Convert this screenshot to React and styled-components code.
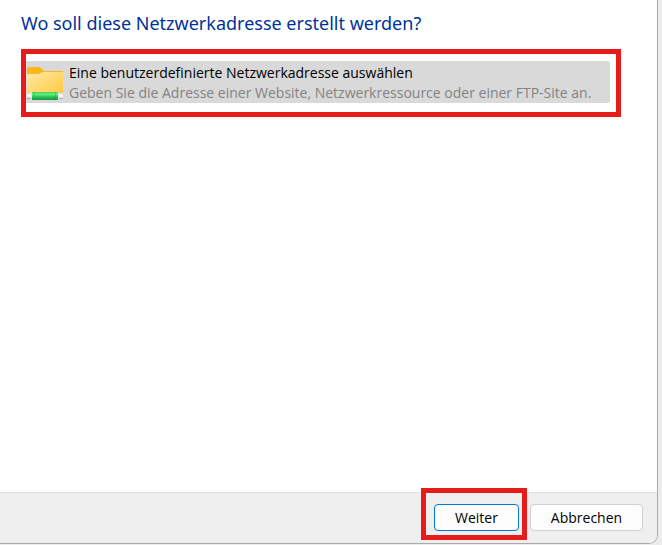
import React, { useState } from "react";
import styled, { createGlobalStyle, css } from "styled-components";

const App = () => {
  const [selected, setSelected] = useState(true);

  return (
    <>
      <GlobalStyle />
      <Desktop>
        <Dialog>
          <Content>
            <Title>Wo soll diese Netzwerkadresse erstellt werden?</Title>
            <Highlight>
              <LocationItem
                type="button"
                aria-pressed={selected}
                $selected={selected}
                onClick={() => setSelected(!selected)}
              >
                <NetworkFolderIcon />
                <LocationText>
                  <LocationName>
                    Eine benutzerdefinierte Netzwerkadresse auswählen
                  </LocationName>
                  <LocationHint>
                    Geben Sie die Adresse einer Website, Netzwerkressource oder
                    einer FTP-Site an.
                  </LocationHint>
                </LocationText>
              </LocationItem>
            </Highlight>
          </Content>
          <Footer>
            <Marked>
              <Button type="button" $primary>
                Weiter
              </Button>
            </Marked>
            <Button type="button" $wide>
              Abbrechen
            </Button>
          </Footer>
        </Dialog>
      </Desktop>
    </>
  );
};

const NetworkFolderIcon = () => (
  <FolderSvg viewBox="0 0 37 34" aria-hidden="true">
    <defs>
      <linearGradient id="folder" x1="0" y1="0" x2="1" y2="1">
        <stop offset="0" stopColor="#ffe9a8" />
        <stop offset="1" stopColor="#ffc93e" />
      </linearGradient>
      <linearGradient id="pipe" x1="0" y1="0" x2="0" y2="1">
        <stop offset="0" stopColor="#d8d8d8" />
        <stop offset="0.4" stopColor="#ffffff" />
        <stop offset="0.75" stopColor="#e4e4e4" />
        <stop offset="1" stopColor="#8c8c8c" />
      </linearGradient>
      <linearGradient id="cable" x1="0" y1="0" x2="0" y2="1">
        <stop offset="0" stopColor="#43cf62" />
        <stop offset="0.3" stopColor="#5df07a" />
        <stop offset="0.6" stopColor="#2fc257" />
        <stop offset="1" stopColor="#159345" />
      </linearGradient>
    </defs>
    <path
      d="M1 3Q1 1 3 1H12Q14 1 15 2L18 5H36Q37 5 37 6V10H1Z"
      fill="#fbb81b"
    />
    <path
      d="M1 8H12Q14 8 15 7L17 6H37V28H1Z"
      fill="url(#folder)"
    />
    <rect x="1" y="27" width="36" height="6" fill="url(#pipe)" />
    <rect x="5" y="26" width="28" height="8" fill="#e6e6e6" />
    <rect x="6" y="26" width="26" height="8" fill="url(#cable)" />
    <path d="M8.5 26V34M29.5 26V34" stroke="#159345" strokeOpacity="0.3" />
  </FolderSvg>
);

export default App;

const GlobalStyle = createGlobalStyle`
  * {
    box-sizing: border-box;
  }

  body {
    margin: 0;
    background: #ececec;
    font-family: "Segoe UI", "Open Sans", "Noto Sans", sans-serif;
  }
`;

const redFrame = css`
  border: 5px solid #e81b1b;
`;

const Desktop = styled.div`
  min-height: 100vh;
  display: flex;
  padding: 0 4px 1px 0;
`;

const Dialog = styled.main`
  flex: 1;
  display: flex;
  flex-direction: column;
  overflow: hidden;
  background: #ffffff;
  border: solid #a9a9a9;
  border-width: 0 1px 1px 0;
  border-bottom-right-radius: 9px;
`;

const Content = styled.section`
  flex: 1;
  padding: 9px 36px 20px 21px;
`;

const Title = styled.h1`
  margin: 0 0 12px;
  color: #003399;
  font-family: "Segoe UI", "Noto Sans", sans-serif;
  font-size: 18px;
  font-weight: 400;
  line-height: 28px;
`;

const Highlight = styled.div`
  ${redFrame}
  padding: 7px 6px 9px 0;
`;

const LocationItem = styled.button`
  width: 100%;
  display: flex;
  align-items: center;
  gap: 6px;
  padding: 2px 0 0;
  border: 0;
  border-radius: 0 2px 2px 0;
  background: ${(props) => (props.$selected ? "#d9d9d9" : "transparent")};
  font: inherit;
  text-align: left;
`;

const FolderSvg = styled.svg`
  flex: none;
  width: 37px;
  height: 34px;
`;

const LocationText = styled.span`
  display: flex;
  flex-direction: column;
  font-size: 14px;
  line-height: 20px;
`;

const LocationName = styled.span`
  color: #000000;
`;

const LocationHint = styled.span`
  color: #838383;
`;

const Footer = styled.footer`
  display: flex;
  justify-content: flex-end;
  gap: 11px;
  padding: 11px 14px 12px;
  border-top: 1px solid #dfdfdf;
  background: #efefef;
`;

const Marked = styled.div`
  position: relative;

  &::after {
    ${redFrame}
    content: "";
    position: absolute;
    inset: -16px -8px -9px -13px;
    pointer-events: none;
  }
`;

const Button = styled.button`
  width: ${(props) => (props.$wide ? "113px" : "85px")};
  height: 27px;
  padding: 0;
  border: 1px solid ${(props) => (props.$primary ? "#0078d4" : "#d0d0d0")};
  border-radius: 4px;
  background: #fdfdfd;
  color: #000000;
  font-family: inherit;
  font-size: 14px;
  line-height: 20px;
`;
